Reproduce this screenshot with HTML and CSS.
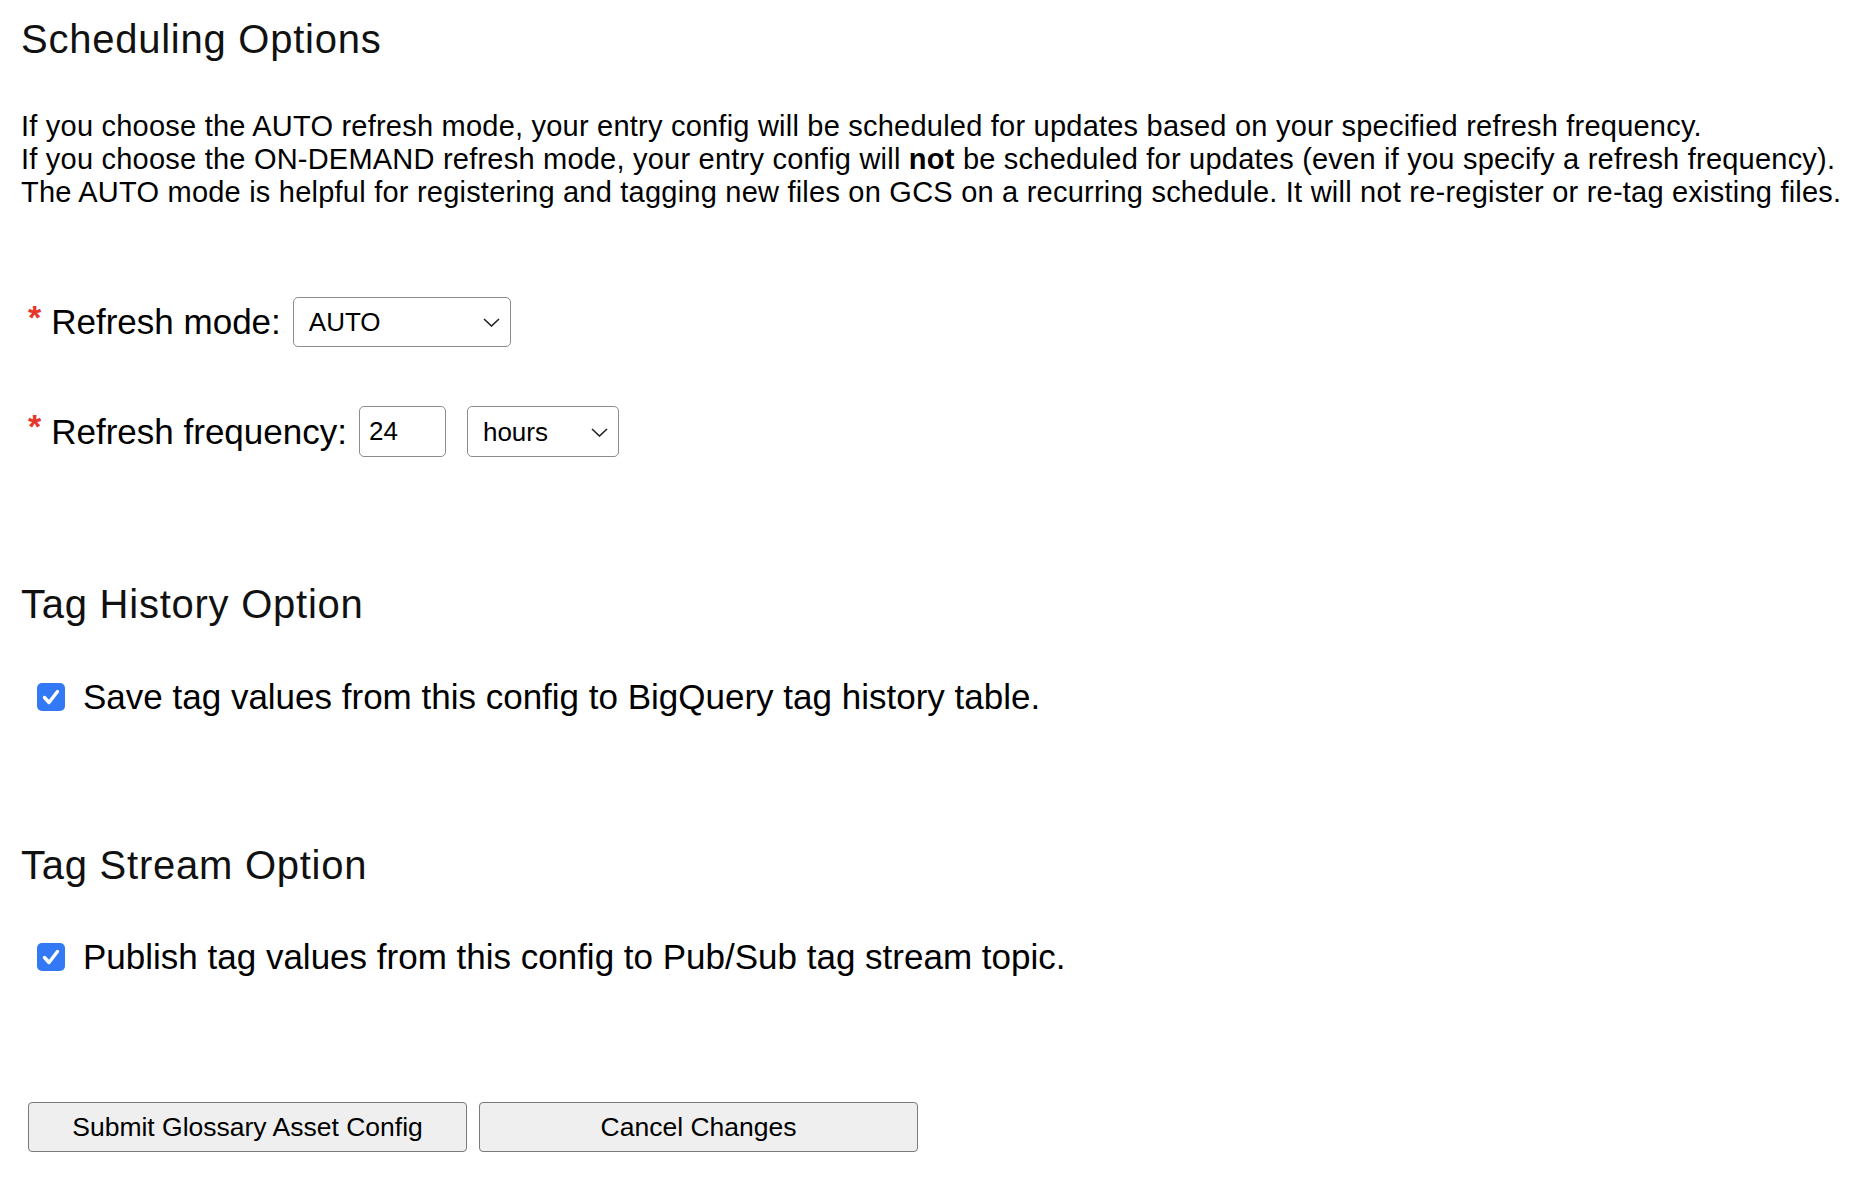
FILE: index.html
```html
<!DOCTYPE html>
<html lang="en">
<head>
<meta charset="utf-8">
<title>Scheduling Options</title>
<link rel="stylesheet" href="styles.css">
</head>
<body>
<main class="page">
  <section class="section section-schedule">
    <h2 class="title">Scheduling Options</h2>
    <p class="desc">If you choose the AUTO refresh mode, your entry config will be scheduled for updates based on your specified refresh frequency.<br>If you choose the ON-DEMAND refresh mode, your entry config will <b>not</b> be scheduled for updates (even if you specify a refresh frequency).<br>The AUTO mode is helpful for registering and tagging new files on GCS on a recurring schedule. It will not re-register or re-tag existing files.</p>

    <div class="field field-mode">
      <span class="req">*</span>
      <label class="label" for="mode">Refresh mode:</label>
      <div class="select-wrap select-mode">
        <select id="mode" class="select">
          <option>AUTO</option>
          <option>ON-DEMAND</option>
        </select>
        <svg class="chev" width="17" height="9" viewBox="0 0 17 9"><path d="M1 1 L8.5 8 L16 1" fill="none" stroke="#222" stroke-width="1.6"/></svg>
      </div>
    </div>

    <div class="field field-freq">
      <span class="req">*</span>
      <label class="label" for="freq">Refresh frequency:</label>
      <input id="freq" class="input" type="text" value="24">
      <div class="select-wrap select-unit">
        <select class="select">
          <option>hours</option>
          <option>days</option>
        </select>
        <svg class="chev" width="17" height="9" viewBox="0 0 17 9"><path d="M1 1 L8.5 8 L16 1" fill="none" stroke="#222" stroke-width="1.6"/></svg>
      </div>
    </div>
  </section>

  <section class="section section-history">
    <h2 class="title">Tag History Option</h2>
    <label class="check-row">
      <span class="box"><svg width="28" height="28" viewBox="0 0 28 28"><path d="M7.5 14.5 L12 19.5 L20.5 8.5" fill="none" stroke="#fff" stroke-width="3.4" stroke-linecap="round" stroke-linejoin="round"/></svg></span>
      <span class="check-text">Save tag values from this config to BigQuery tag history table.</span>
    </label>
  </section>

  <section class="section section-stream">
    <h2 class="title">Tag Stream Option</h2>
    <label class="check-row">
      <span class="box"><svg width="28" height="28" viewBox="0 0 28 28"><path d="M7.5 14.5 L12 19.5 L20.5 8.5" fill="none" stroke="#fff" stroke-width="3.4" stroke-linecap="round" stroke-linejoin="round"/></svg></span>
      <span class="check-text">Publish tag values from this config to Pub/Sub tag stream topic.</span>
    </label>
  </section>

  <div class="actions">
    <button class="btn" type="button">Submit Glossary Asset Config</button>
    <button class="btn" type="button">Cancel Changes</button>
  </div>
</main>
</body>
</html>
```

FILE: styles.css
```css
* { box-sizing: border-box; }

html, body {
  margin: 0;
  padding: 0;
  background: #fff;
}

body {
  font-family: "Liberation Sans", Arial, Helvetica, sans-serif;
  color: #000;
}

.page {
  padding: 16px 20px 0 21px;
  display: flex;
  flex-direction: column;
}

.title {
  margin: 0;
  font-size: 40px;
  line-height: 46px;
  font-weight: normal;
  letter-spacing: 0.75px;
  color: #111;
}

.desc {
  margin: 48px 0 0 0;
  font-size: 29px;
  line-height: 33px;
  letter-spacing: 0.22px;
  white-space: nowrap;
}

.desc b { font-weight: bold; }

.field {
  display: flex;
  align-items: center;
  margin-left: 7px;
  height: 50px;
}

.field-mode { margin-top: 88px; }
.field-freq { margin-top: 59px; height: 51px; }

.req {
  color: #e8352b;
  font-size: 34px;
  line-height: 30px;
  font-weight: bold;
  align-self: flex-start;
  margin-top: 5px;
  margin-right: 10px;
}

.label {
  font-size: 35px;
  line-height: 40px;
  margin-right: 12px;
}

.select-wrap {
  position: relative;
  height: 100%;
}

.select-mode { width: 218px; }
.select-unit { width: 152px; margin-left: 21px; }

.select {
  appearance: none;
  -webkit-appearance: none;
  width: 100%;
  height: 100%;
  margin: 0;
  padding: 0 0 0 15px;
  border: 1.5px solid #8c8c8c;
  border-radius: 5px;
  background: #fff;
  font-family: "Liberation Sans", Arial, sans-serif;
  font-size: 26px;
  color: #000;
}

.chev {
  position: absolute;
  right: 11px;
  top: 50%;
  margin-top: -4px;
  pointer-events: none;
}

.input {
  width: 87px;
  height: 100%;
  margin: 0;
  padding: 0 0 0 9px;
  border: 1.5px solid #8c8c8c;
  border-radius: 5px;
  font-family: "Liberation Sans", Arial, sans-serif;
  font-size: 26px;
  color: #000;
  background: #fff;
}

.section-history { margin-top: 124px; }
.section-stream { margin-top: 125px; }

.check-row {
  display: flex;
  align-items: center;
  margin: 50px 0 0 16px;
  height: 40px;
}

.section-stream .check-row { margin-top: 49px; }

.box {
  width: 28px;
  height: 28px;
  border-radius: 5px;
  background: #3379f5;
  display: flex;
  flex: none;
}

.check-text {
  margin-left: 18px;
  font-size: 35px;
  line-height: 40px;
}

.actions {
  display: flex;
  gap: 12px;
  margin: 125px 0 0 7px;
}

.btn {
  width: 439px;
  height: 50px;
  margin: 0;
  padding: 0;
  border: 1.5px solid #7a7a7a;
  border-radius: 4px;
  background: #efefef;
  font-family: "Liberation Sans", Arial, sans-serif;
  font-size: 26.5px;
  color: #000;
}
```
